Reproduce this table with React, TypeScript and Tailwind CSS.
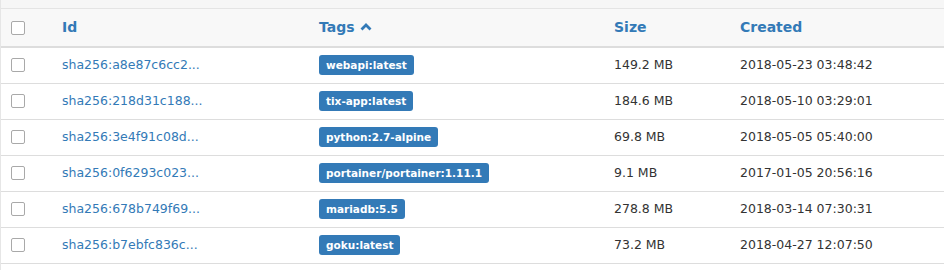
const images = [
  { id: "sha256:a8e87c6cc2...", tag: "webapi:latest", size: "149.2 MB", created: "2018-05-23 03:48:42" },
  { id: "sha256:218d31c188...", tag: "tix-app:latest", size: "184.6 MB", created: "2018-05-10 03:29:01" },
  { id: "sha256:3e4f91c08d...", tag: "python:2.7-alpine", size: "69.8 MB", created: "2018-05-05 05:40:00" },
  { id: "sha256:0f6293c023...", tag: "portainer/portainer:1.11.1", size: "9.1 MB", created: "2017-01-05 20:56:16" },
  { id: "sha256:678b749f69...", tag: "mariadb:5.5", size: "278.8 MB", created: "2018-03-14 07:30:31" },
  { id: "sha256:b7ebfc836c...", tag: "goku:latest", size: "73.2 MB", created: "2018-04-27 12:07:50" },
];

function Checkbox() {
  return <span className="block w-[14px] h-[14px] border border-[#a9a9a9] rounded-[2px] bg-white" />;
}

export default function App() {
  return (
    <div className="w-[944px] h-[270px] bg-white overflow-hidden border-l border-[#e6e6e6]" style={{ fontFamily: '"DejaVu Sans", sans-serif' }}>
      <div className="h-[9px] bg-[#f6f6f6] border-b border-[#e4e4e4]" />
      <table className="w-full table-fixed border-collapse">
        <colgroup>
          <col className="w-[61px]" />
          <col className="w-[257px]" />
          <col className="w-[295px]" />
          <col className="w-[126px]" />
          <col />
        </colgroup>
        <thead>
          <tr className="h-[38px] bg-[#f8f8f8] border-b-2 border-[#dddddd] text-[#337ab7] text-[14px] font-bold text-left">
            <th className="pl-[10px] align-middle"><Checkbox /></th>
            <th className="font-bold">Id</th>
            <th className="font-bold">
              <span className="inline-flex items-center gap-[5px]">
                Tags
                <svg width="12" height="9" viewBox="0 0 12 9" className="mt-[-2px]">
                  <path d="M1.5 7.5 L6 3 L10.5 7.5" fill="none" stroke="#337ab7" strokeWidth="2.8" />
                </svg>
              </span>
            </th>
            <th className="font-bold">Size</th>
            <th className="font-bold">Created</th>
          </tr>
        </thead>
        <tbody>
          {images.map((img) => (
            <tr key={img.id} className="h-[36px] border-b border-[#dddddd] text-[12.5px] text-[#333333]">
              <td className="pl-[10px] align-middle"><Checkbox /></td>
              <td className="text-[#337ab7]">{img.id}</td>
              <td>
                <span className="inline-block bg-[#337ab7] text-white font-bold text-[10.5px] leading-[20px] px-[7px] rounded-[3px]">
                  {img.tag}
                </span>
              </td>
              <td>{img.size}</td>
              <td>{img.created}</td>
            </tr>
          ))}
        </tbody>
      </table>
    </div>
  );
}
